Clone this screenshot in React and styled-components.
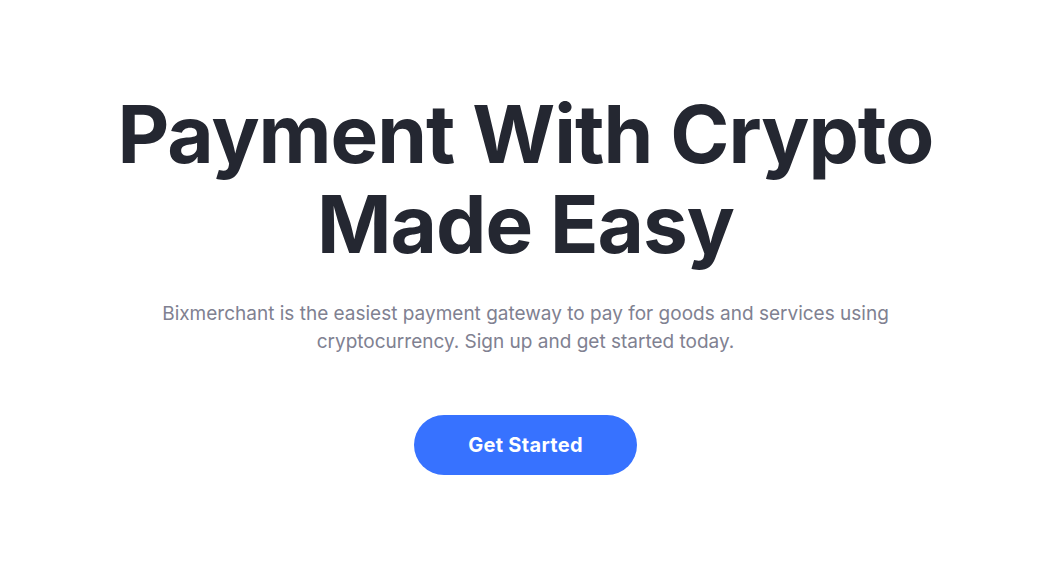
import React from 'react';
import styled, { createGlobalStyle } from 'styled-components';

const GlobalStyle = createGlobalStyle`
  html, body {
    margin: 0;
    padding: 0;
    background: #ffffff;
  }
  body {
    font-family: Inter, "Liberation Sans", sans-serif;
  }
`;

const Hero = styled.section`
  display: flex;
  flex-direction: column;
  align-items: center;
  padding-top: 89px;
  text-align: center;
`;

const Title = styled.h1`
  margin: 0;
  font-size: 80px;
  line-height: 90px;
  font-weight: 700;
  letter-spacing: -1px;
  color: #242731;
`;

const Lead = styled.p`
  margin: 31px 0 0;
  max-width: 760px;
  font-size: 19px;
  line-height: 28px;
  color: #808191;
`;

const Button = styled.button`
  margin-top: 59px;
  width: 223px;
  height: 60px;
  border: none;
  border-radius: 30px;
  background: #3772ff;
  color: #fff;
  font-family: inherit;
  font-size: 20px;
  font-weight: 700;
  letter-spacing: 0.3px;
  cursor: pointer;
`;

export default function App() {
  return (
    <>
      <GlobalStyle />
      <Hero>
        <Title>
          Payment With Crypto
          <br />
          Made Easy
        </Title>
        <Lead>
          Bixmerchant is the easiest payment gateway to pay for goods and services using
          cryptocurrency. Sign up and get started today.
        </Lead>
        <Button>Get Started</Button>
      </Hero>
    </>
  );
}
